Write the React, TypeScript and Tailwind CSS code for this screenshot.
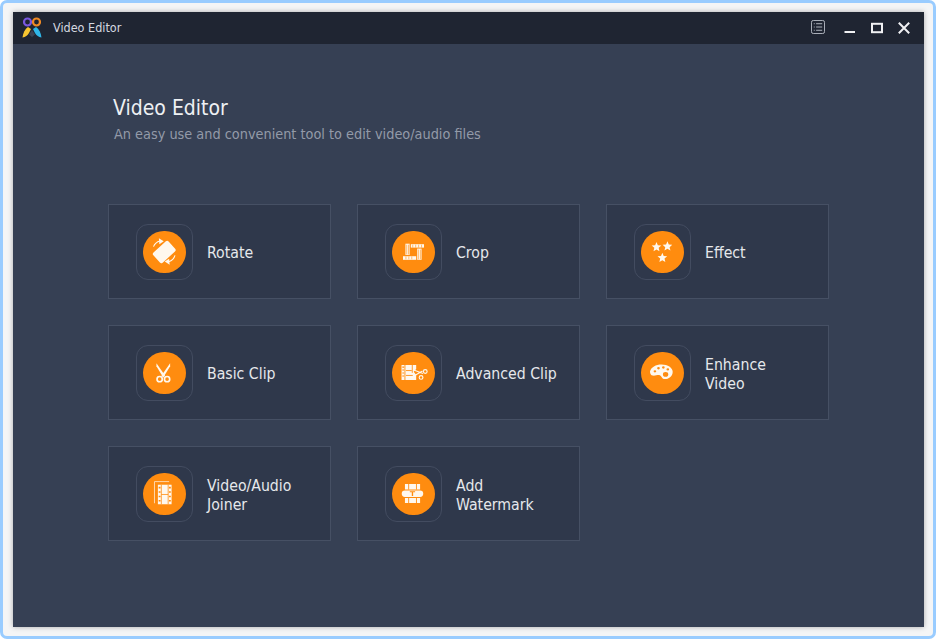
import type { ReactNode } from 'react'

const W = '#fff8ee'
const O = '#ff8c0f'

function RotateIcon() {
  return (
    <svg viewBox="0 0 43 43" className="w-full h-full">
      <rect x="11" y="14.500" width="21" height="14" rx="2" transform="rotate(-42 21.500 21.500)" fill={W} />
      <path d="M10.500 16c1.200-3 3.500-5 6.500-5.800" fill="none" stroke={W} strokeWidth="1.100" />
      <path d="M16 7.500l5 3-4.500 3z" fill={W} />
      <path d="M32.500 25c-1 3.500-3.500 5.500-6.500 6.500" fill="none" stroke={W} strokeWidth="1.100" />
      <path d="M27 34.500l-5-3.200 4.500-3z" fill={W} />
    </svg>
  )
}

function CropIcon() {
  return (
    <svg viewBox="0 0 43 43" className="w-full h-full">
      <rect x="13.500" y="13" width="4.300" height="11.500" fill={W} />
      <rect x="19" y="13.500" width="13.500" height="3.500" fill={W} />
      <rect x="25.500" y="18" width="4.500" height="11.500" fill={W} />
      <rect x="11" y="25.800" width="13.500" height="3.700" fill={W} />
      <path d="M14.800 14v10M16.700 14v10M26.700 19v10M28.800 19v10M21 14v3M24 14v3M27 14v3M30 14v3M14 26v3M17 26v3M20 26v3" stroke={O} strokeWidth="0.600" />
    </svg>
  )
}

function Star({ x, y, r }: { x: number; y: number; r: number }) {
  const pts = Array.from({ length: 10 }, (_, i) => {
    const a = (Math.PI / 5) * i - Math.PI / 2
    const d = i % 2 === 0 ? r : r * 0.45
    return `${(x + d * Math.cos(a)).toFixed(2)},${(y + d * Math.sin(a)).toFixed(2)}`
  }).join(' ')
  return <polygon points={pts} fill={W} />
}

function EffectIcon() {
  return (
    <svg viewBox="0 0 43 43" className="w-full h-full">
      <Star x={15.600} y={16.500} r={5.200} />
      <Star x={26.800} y={15.800} r={5.200} />
      <Star x={21.600} y={27.500} r={5.200} />
    </svg>
  )
}

function ClipIcon() {
  return (
    <svg viewBox="0 0 43 43" className="w-full h-full">
      <path d="M13.500 11.500l8.800 12.500-1.800 2.200-7-11.500z" fill={W} />
      <path d="M27.500 11.500l-8.800 12.500 1.800 2.200 7-11.500z" fill={W} />
      <circle cx="16.800" cy="27.800" r="2.700" fill="none" stroke={W} strokeWidth="1.700" />
      <circle cx="24.400" cy="27.800" r="2.700" fill="none" stroke={W} strokeWidth="1.700" />
    </svg>
  )
}

function AdvancedClipIcon() {
  return (
    <svg viewBox="0 0 43 43" className="w-full h-full">
      <path d="M9.500 13.300h15v4l-2.500 3 2.500 3.200v5.200h-15z" fill={W} />
      <path d="M13 13.300v15.400M20.500 13.300v8" stroke={O} strokeWidth="0.900" />
      <path d="M10.300 15.500h1.900M10.300 18.500h1.900M10.300 21.500h1.900M10.300 24.500h1.900" stroke={O} strokeWidth="1.100" />
      <path d="M14 19h6M14 24h7" stroke={O} strokeWidth="0.900" />
      <path d="M22 18.500l9.500 3.500M23 24l8-4.500" stroke={W} strokeWidth="1.200" />
      <circle cx="33.800" cy="20" r="1.900" fill="none" stroke={W} strokeWidth="1.200" />
      <circle cx="29.500" cy="26" r="1.900" fill="none" stroke={W} strokeWidth="1.200" />
    </svg>
  )
}

function EnhanceIcon() {
  return (
    <svg viewBox="0 0 43 43" className="w-full h-full">
      <g transform="translate(0.800 3.600) scale(0.910 0.790)">
        <path d="M9 20.500C10 15 15.500 11.500 22 11.500c7 0 12.500 4 12.500 9.500 0 6.500-5 9.500-8.500 9.500-4 0-3.500-3.500-6-5-2-1-5 1-8 .5-2-.4-3-2.500-3-5z" fill={W} />
        <circle cx="14.500" cy="20.500" r="1.500" fill={O} />
        <circle cx="18.500" cy="16.500" r="1.500" fill={O} />
        <circle cx="24" cy="15.500" r="1.500" fill={O} />
        <circle cx="29" cy="18" r="1.500" fill={O} />
        <circle cx="26.500" cy="24.500" r="3" fill={O} />
      </g>
    </svg>
  )
}

function JoinerIcon() {
  return (
    <svg viewBox="0 0 43 43" className="w-full h-full">
      <path d="M11.500 31V8.800h15" fill="none" stroke={W} strokeWidth="0.900" opacity="0.800" />
      <rect x="15" y="12" width="14" height="20" fill={W} />
      <path d="M18.500 12v20M25.500 12v20M18.500 22h7" stroke={O} strokeWidth="0.800" />
      <path d="M15.800 15h1.900M15.800 19.500h1.900M15.800 24h1.900M15.800 28.500h1.900M26.300 15h1.900M26.300 19.500h1.900M26.300 24h1.900M26.300 28.500h1.900" stroke={O} strokeWidth="1.600" />
    </svg>
  )
}

function WatermarkIcon() {
  return (
    <svg viewBox="0 0 43 43" className="w-full h-full">
      <path d="M13 11.200h15.500v5.800H13zM13 25.500h15.500v5.300H13z" fill={W} />
      <path d="M16.800 11.200v5.800M24.800 11.200v5.800M16.800 25.500v5.300M24.800 25.500v5.300" stroke={O} strokeWidth="0.900" />
      <rect x="9.700" y="18" width="22" height="6.500" rx="3.200" fill={W} />
      <path d="M18 18.700h5.400v1.100h-2v3.800H20v-3.800h-2z" fill={O} />
    </svg>
  )
}

const tools: { label: ReactNode; icon: ReactNode; twoLine?: boolean }[] = [
  { label: 'Rotate', icon: <RotateIcon /> },
  { label: 'Crop', icon: <CropIcon /> },
  { label: 'Effect', icon: <EffectIcon /> },
  { label: 'Basic Clip', icon: <ClipIcon /> },
  { label: 'Advanced Clip', icon: <AdvancedClipIcon /> },
  { label: <>Enhance<br />Video</>, icon: <EnhanceIcon />, twoLine: true },
  { label: <>Video/Audio<br />Joiner</>, icon: <JoinerIcon />, twoLine: true },
  { label: <>Add<br />Watermark</>, icon: <WatermarkIcon />, twoLine: true },
]

function Logo() {
  return (
    <svg viewBox="0 0 20 22" className="w-[20px] h-[22px]">
      <path d="M6 10C3 12 1 16 .5 20.500c3-.5 5-2 6.500-4.500L9 12z" fill="#f7c531" />
      <path d="M14 10c3 2 5 6 5.500 10.500-3-.5-5-2-6.500-4.500L11 12z" fill="#2fb6e8" />
      <path d="M10 13l3 4.500-3 2.500-3-2.500z" fill="#3b4252" />
      <circle cx="5.500" cy="5" r="3.500" fill="none" stroke="#7a58e0" strokeWidth="2.200" />
      <circle cx="14.500" cy="5" r="3.500" fill="none" stroke="#f08a24" strokeWidth="2.200" />
    </svg>
  )
}

export default function App() {
  return (
    <div className="w-[936px] h-[639px] overflow-hidden bg-[#f4f5f6] border-[3px] border-[#99ccff] rounded-[7px] pt-[9px] pl-[10px] pr-[9px] pb-[9px] font-['DejaVu_Sans_Condensed','DejaVu_Sans',sans-serif]">
      <div className="w-[911px] h-[615px] bg-[#364054] flex flex-col shadow-[0_0_5px_rgba(0,0,0,0.3)]">
        <div className="h-[32px] bg-[#1f2532] flex items-center pl-[9px] shrink-0">
          <Logo />
          <span className="ml-[11px] mt-[1px] text-[12.500px] text-[#d5d9e0]">Video Editor</span>
          <div className="ml-auto flex items-center text-white">
            <svg viewBox="0 0 15 15" className="w-[14px] h-[14px] mb-[2px]">
              <rect x="0.500" y="0.500" width="14" height="14" rx="2" fill="none" stroke="#b9bec7" />
              <path d="M3 4h1M3 7.500h1M3 11h1M5.500 4h6.500M5.500 7.500h6.500M5.500 11h6.500" stroke="#b9bec7" />
            </svg>
            <svg viewBox="0 0 12 12" className="w-[12px] h-[12px] ml-[19px]">
              <path d="M.5 10h10.500" stroke="#f0f1f3" strokeWidth="2" />
            </svg>
            <svg viewBox="0 0 12 12" className="w-[12px] h-[12px] ml-[15px]">
              <rect x="1" y="1.800" width="10" height="8.400" fill="none" stroke="#f0f1f3" strokeWidth="2" />
            </svg>
            <svg viewBox="0 0 12 12" className="w-[12px] h-[12px] ml-[15px] mr-[14px]">
              <path d="M.8.8l10.400 10.400M11.200.8L.8 11.200" stroke="#f0f1f3" strokeWidth="2" />
            </svg>
          </div>
        </div>
        <div className="pl-[95px] flex-1">
          <div className="pl-[5px] pt-[50px] h-[160px]">
            <h1 className="text-[21px] leading-[28px] text-[#eef0f3]">Video Editor</h1>
            <p className="text-[14.350px] leading-[20px] mt-[2px] ml-[1px] text-[#939aa8]">An easy use and convenient tool to edit video/audio files</p>
          </div>
          <div className="grid grid-cols-[223px_223px_223px] gap-x-[26px] gap-y-[26px]">
            {tools.map((t, i) => (
              <div key={i} className="h-[95px] bg-[#2f384b] border border-[#465064] flex items-center pl-[27px] pt-[1px]">
                <div className="w-[57px] h-[56px] rounded-[12px] border border-[#434c60] flex items-center justify-center shrink-0">
                  <div className="w-[42.500px] h-[42px] rounded-full bg-[#ff8c0f]">{t.icon}</div>
                </div>
                <div className={t.twoLine ? 'ml-[14px] mt-[2px] text-[15.700px] leading-[19px] text-[#e6e8ec]' : 'ml-[14px] text-[15.700px] leading-[19px] text-[#e6e8ec]'}>{t.label}</div>
              </div>
            ))}
          </div>
        </div>
      </div>
    </div>
  )
}
